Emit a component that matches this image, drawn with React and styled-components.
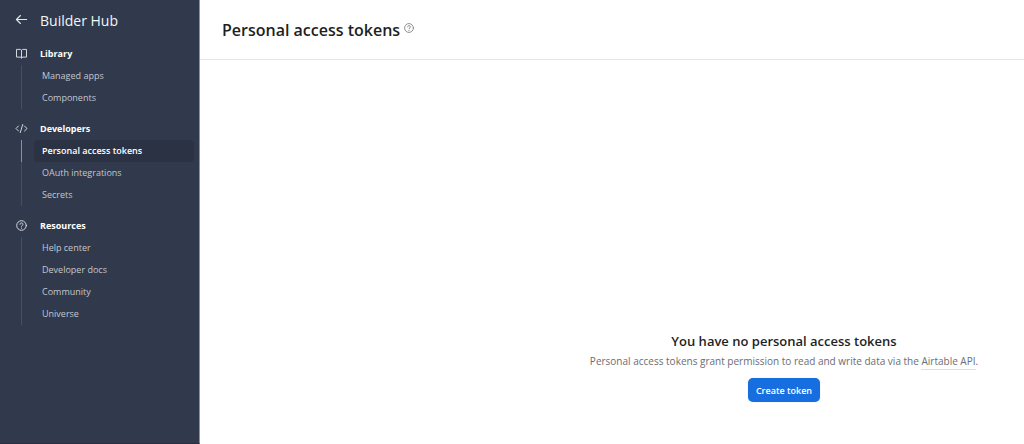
import React from 'react';
import styled, { createGlobalStyle } from 'styled-components';

const GlobalStyle = createGlobalStyle`
  * {
    box-sizing: border-box;
  }

  body {
    margin: 0;
    background: #ffffff;
    color: #1d1f25;
    font-family: 'Segoe UI', 'Open Sans', 'Noto Sans', sans-serif;
    font-size: 9px;
  }
`;

const Page = styled.div`
  display: flex;
  min-height: 100vh;
`;

const Sidebar = styled.aside`
  flex: 0 0 200px;
  padding-bottom: 24px;
  background: #31394c;
  border-right: 1px solid #8d919b;
  border-bottom: 1px solid #2a2f42;
`;

const SidebarHeader = styled.div`
  display: flex;
  align-items: center;
  height: 41px;
  padding-left: 15px;
`;

const BackLink = styled.a`
  display: flex;
  width: 25px;
  margin-bottom: 2px;
  color: #e4e6ea;
`;

const HubName = styled.span`
  color: #f4f5f7;
  font-size: 14px;
  line-height: 20px;
`;

const Group = styled.section`
  margin-bottom: 7px;
`;

const GroupTitle = styled.h2`
  display: flex;
  align-items: center;
  height: 24px;
  margin: 0;
  padding-left: 15px;
  color: #ffffff;
  font-size: 9px;
  font-weight: 700;

  svg {
    flex-shrink: 0;
    width: 13px;
    height: 13px;
    margin-right: 12px;
    color: #d3d6dc;
  }
`;

const GroupList = styled.ul`
  margin: 0;
  padding: 0 5px 0 21px;
  list-style: none;
`;

const GroupItem = styled.li`
  display: flex;
  height: 22px;
  padding-left: 12px;
  border-left: 1px solid ${({ $active }) => ($active ? '#8b909c' : '#464e5f')};
`;

const ItemLink = styled.a`
  flex: 1;
  padding-left: 8px;
  border-radius: 4px;
  background: ${({ $active }) => ($active ? '#2b3243' : 'transparent')};
  color: ${({ $active }) => ($active ? '#ffffff' : '#c3c7ce')};
  font-weight: ${({ $active }) => ($active ? 600 : 400)};
  line-height: 22px;
  text-decoration: none;

  &:hover {
    color: #ffffff;
  }
`;

const Main = styled.main`
  flex: 1;
  min-width: 0;
`;

const TopBar = styled.header`
  display: flex;
  align-items: center;
  height: 60px;
  padding-left: 22px;
  border-bottom: 1px solid #e5e6e8;
`;

const Title = styled.h1`
  margin: 0;
  font-size: 16px;
  font-weight: 600;
  line-height: 24px;
`;

const HelpButton = styled.button`
  display: flex;
  margin: 0 0 3px 3px;
  padding: 0;
  border: none;
  background: none;
  color: #85878c;
  cursor: pointer;
`;

const EmptyState = styled.div`
  display: flex;
  flex-direction: column;
  align-items: center;
  padding: 270px 0 24px 344px;
`;

const EmptyTitle = styled.h2`
  margin: 0;
  font-size: 13px;
  font-weight: 600;
  line-height: 22px;
`;

const EmptyText = styled.p`
  margin: 0 0 8px;
  color: #6b6d73;
  font-size: 10px;
  line-height: 18px;
  white-space: nowrap;
`;

const ApiLink = styled.a`
  padding-bottom: 1px;
  border-bottom: 1px solid #dedfe2;
  color: inherit;
  text-decoration: none;
`;

const CreateButton = styled.button`
  height: 24px;
  padding: 0 8px;
  border: none;
  border-radius: 5px;
  background: #176ee1;
  box-shadow: 0 0 1px rgba(0, 0, 0, 0.3);
  color: #ffffff;
  font-family: inherit;
  font-size: 9px;
  font-weight: 600;
  cursor: pointer;
`;

const Icon = ({ size = 13, children }) => (
  <svg
    width={size}
    height={size}
    viewBox="0 0 13 13"
    fill="none"
    stroke="currentColor"
    strokeLinecap="round"
    strokeLinejoin="round"
    aria-hidden="true"
  >
    {children}
  </svg>
);

const ArrowIcon = () => (
  <Icon>
    <path d="M11.6 6.5H1.6M5.4 2.5l-4 4 4 4" strokeWidth="1.1" />
  </Icon>
);

const BookIcon = () => (
  <Icon>
    <path d="M6.5 3.6c0-.7-.6-1.2-1.4-1.2H1.5v7.7h3.6c.8 0 1.4.4 1.4 1 0-.6.6-1 1.4-1h3.6V2.4H7.9c-.8 0-1.4.5-1.4 1.2Zm0 0v7.5" />
  </Icon>
);

const CodeIcon = () => (
  <Icon>
    <path d="M3.5 4 1 6.5 3.5 9M9.5 4 12 6.5 9.5 9M7.7 2.5l-2.4 8" />
  </Icon>
);

const HelpIcon = ({ size }) => (
  <Icon size={size}>
    <circle cx="6.5" cy="6.5" r="4.8" />
    <path d="M5 5.3c0-.9.7-1.4 1.5-1.4S8 4.5 8 5.3c0 1-1.5 1.1-1.5 2" />
    <circle cx="6.5" cy="9.1" r=".6" fill="currentColor" stroke="none" />
  </Icon>
);

const groups = [
  { title: 'Library', icon: BookIcon, items: ['Managed apps', 'Components'] },
  {
    title: 'Developers',
    icon: CodeIcon,
    items: ['Personal access tokens', 'OAuth integrations', 'Secrets'],
  },
  {
    title: 'Resources',
    icon: HelpIcon,
    items: ['Help center', 'Developer docs', 'Community', 'Universe'],
  },
];

const activeItem = 'Personal access tokens';

const App = () => {
  return (
    <>
      <GlobalStyle />
      <Page>
        <Sidebar>
          <SidebarHeader>
            <BackLink href="#" aria-label="Back">
              <ArrowIcon />
            </BackLink>
            <HubName>Builder Hub</HubName>
          </SidebarHeader>
          <nav>
            {groups.map(({ title, icon: GroupIcon, items }) => (
              <Group key={title}>
                <GroupTitle>
                  <GroupIcon />
                  {title}
                </GroupTitle>
                <GroupList>
                  {items.map((item) => (
                    <GroupItem key={item} $active={item === activeItem}>
                      <ItemLink href="#" $active={item === activeItem}>
                        {item}
                      </ItemLink>
                    </GroupItem>
                  ))}
                </GroupList>
              </Group>
            ))}
          </nav>
        </Sidebar>

        <Main>
          <TopBar>
            <Title>Personal access tokens</Title>
            <HelpButton type="button" aria-label="Help">
              <HelpIcon size={12} />
            </HelpButton>
          </TopBar>
          <EmptyState>
            <EmptyTitle>You have no personal access tokens</EmptyTitle>
            <EmptyText>
              Personal access tokens grant permission to read and write data via the{' '}
              <ApiLink href="#">Airtable API</ApiLink>.
            </EmptyText>
            <CreateButton type="button">Create token</CreateButton>
          </EmptyState>
        </Main>
      </Page>
    </>
  );
};

export default App;
